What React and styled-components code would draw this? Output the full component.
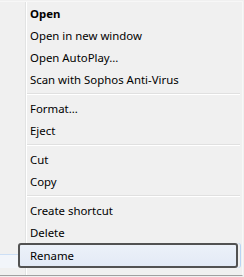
import React from "react";
import styled, { createGlobalStyle } from "styled-components";

const Global = createGlobalStyle`
  html, body {
    margin: 0;
    padding: 0;
    background: #f0f0f0;
  }
  body {
    width: 244px;
    height: 277px;
    overflow: hidden;
  }
`;

const Menu = styled.div`
  width: 242px;
  height: 273px;
  margin-top: 1px;
  border-top: 1px solid #f7f7f7;
  border-right: 1px solid #f8f8f8;
  border-bottom: 1px solid #a0a0a0;
  display: flex;
  flex-direction: column;
  font-family: "Noto Sans", "Open Sans", sans-serif;
  font-size: 11.4px;
  color: #000;
  background: linear-gradient(
    to right,
    #f0f0f0 25px,
    #e2e3e3 25px,
    #e2e3e3 26px,
    #ffffff 26px,
    #ffffff 27px,
    #f0f0f0 27px
  );
`;

const Item = styled.div`
  height: 22px;
  display: flex;
  align-items: center;
  padding-left: 30px;
  font-weight: ${(p) => (p.$bold ? 700 : 400)};
  white-space: nowrap;
`;

const Separator = styled.div`
  height: 7px;
  display: flex;
  flex-direction: column;
  justify-content: center;
  padding-left: 27px;
  padding-right: 2px;

  &::before {
    content: "";
    display: block;
    height: 1px;
    background: #e0e0e0;
  }
  &::after {
    content: "";
    display: block;
    height: 1px;
    background: #ffffff;
  }
`;

const HoverRow = styled.div`
  height: 25px;
  display: flex;
`;

const Under = styled.div`
  width: 18px;
  margin-top: 11px;
  border-top: 1px solid #cddff5;
  background: #f2f5fa;
`;

const Selected = styled.div`
  flex: 1;
  margin-right: 4px;
  display: flex;
  align-items: center;
  padding-left: 10px;
  border: 2px solid #525252;
  border-radius: 3px;
  background: linear-gradient(#ecf1f9, #e3eaf6);
  box-shadow: 2px 0 0 #f0f0f0, 3px 0 0 #b9d3f3;
`;

const groups = [
  [{ label: "Open", bold: true }, { label: "Open in new window" }, { label: "Open AutoPlay..." }, { label: "Scan with Sophos Anti-Virus" }],
  [{ label: "Format..." }, { label: "Eject" }],
  [{ label: "Cut" }, { label: "Copy" }],
  [{ label: "Create shortcut" }, { label: "Delete" }],
];

export default function App() {
  return (
    <>
      <Global />
      <Menu>
        {groups.map((g, i) => (
          <React.Fragment key={i}>
            {i > 0 && <Separator />}
            {g.map((it) => (
              <Item key={it.label} $bold={it.bold}>
                {it.label}
              </Item>
            ))}
          </React.Fragment>
        ))}
        <HoverRow>
          <Under />
          <Selected>Rename</Selected>
        </HoverRow>
      </Menu>
    </>
  );
}
